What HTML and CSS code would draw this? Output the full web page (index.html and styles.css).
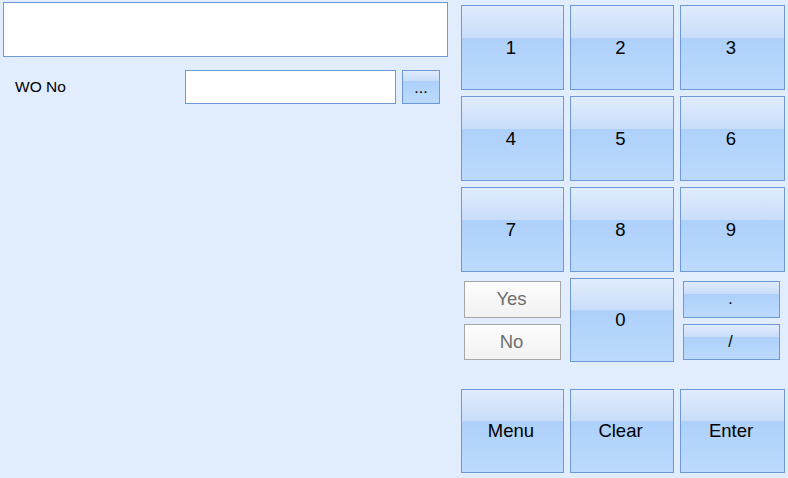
FILE: index.html
```html
<!DOCTYPE html>
<html>
<head>
<meta charset="utf-8">
<link rel="stylesheet" href="styles.css">
</head>
<body>
<div class="app">
  <div class="left">
    <div class="display"></div>
    <div class="wo-row">
      <span class="label">WO No</span>
      <div class="input"></div>
      <div class="btn small">...</div>
    </div>
  </div>
  <div class="keypad">
    <div class="btn key">1</div>
    <div class="btn key">2</div>
    <div class="btn key">3</div>
    <div class="btn key">4</div>
    <div class="btn key">5</div>
    <div class="btn key">6</div>
    <div class="btn key">7</div>
    <div class="btn key">8</div>
    <div class="btn key">9</div>
    <div class="stack">
      <div class="plain">Yes</div>
      <div class="plain">No</div>
    </div>
    <div class="btn key">0</div>
    <div class="stack right">
      <div class="btn half">.</div>
      <div class="btn half">/</div>
    </div>
    <div class="spacer"></div>
    <div class="btn key">Menu</div>
    <div class="btn key">Clear</div>
    <div class="btn key">Enter</div>
  </div>
</div>
</body>
</html>
```
FILE: styles.css
```css
html, body {
  margin: 0;
  padding: 0;
  background: #e1edfd;
}
body {
  font-family: "Liberation Sans", Arial, sans-serif;
  width: 788px;
  height: 478px;
  overflow: hidden;
}
.app {
  display: flex;
  height: 478px;
}
.left {
  width: 461px;
  box-sizing: border-box;
  padding: 2px 0 0 3px;
}
.display {
  width: 445px;
  height: 55px;
  box-sizing: border-box;
  border: 1px solid #6d9ad7;
  background: #fff;
}
.wo-row {
  display: flex;
  align-items: center;
  margin-top: 13px;
  height: 34px;
}
.label {
  width: 182px;
  box-sizing: border-box;
  padding-left: 12px;
  font-size: 15.5px;
  color: #000;
}
.input {
  width: 211px;
  height: 34px;
  box-sizing: border-box;
  border: 1px solid #6d9ad7;
  background: #fff;
}
.btn {
  box-sizing: border-box;
  border: 1px solid #6d9ad7;
  background: linear-gradient(to bottom, #e0ecfd 0%, #c9ddf9 38%, #add0fa 38.5%, #bcdafd 100%);
  display: flex;
  align-items: center;
  justify-content: center;
  color: #000;
}
.small {
  margin-left: 6px;
  width: 38px;
  height: 34px;
  font-size: 16px;
  padding-top: 2px;
  background: linear-gradient(to bottom, #e0ecfd 0%, #c9ddf9 30%, #add0fa 31%, #bcdafd 100%);
}
.keypad {
  display: grid;
  grid-template-columns: 103px 104px 105px;
  grid-template-rows: 85px 85px 85px 84px 15px 84px;
  column-gap: 6px;
  row-gap: 6px;
  padding-top: 5px;
}
.key {
  font-size: 18.5px;
  padding-right: 3px;
}
.stack {
  display: flex;
  flex-direction: column;
  gap: 6px;
  padding: 3px 3px 2px 3px;
}
.stack.right {
  padding: 3px 5px 2px 3px;
}
.plain {
  flex: 1;
  box-sizing: border-box;
  border: 1px solid #a7a7a7;
  background: linear-gradient(to bottom, #fdfdfd, #f1f1f1);
  color: #6e6e6e;
  font-size: 18.5px;
  display: flex;
  align-items: center;
  justify-content: center;
  padding-right: 2px;
}
.half {
  flex: 1;
  font-size: 16px;
  padding-right: 2px;
  background: linear-gradient(to bottom, #e0ecfd 0%, #c9ddf9 34%, #add0fa 35%, #bcdafd 100%);
}
.spacer {
  grid-column: 1 / 4;
}
```
